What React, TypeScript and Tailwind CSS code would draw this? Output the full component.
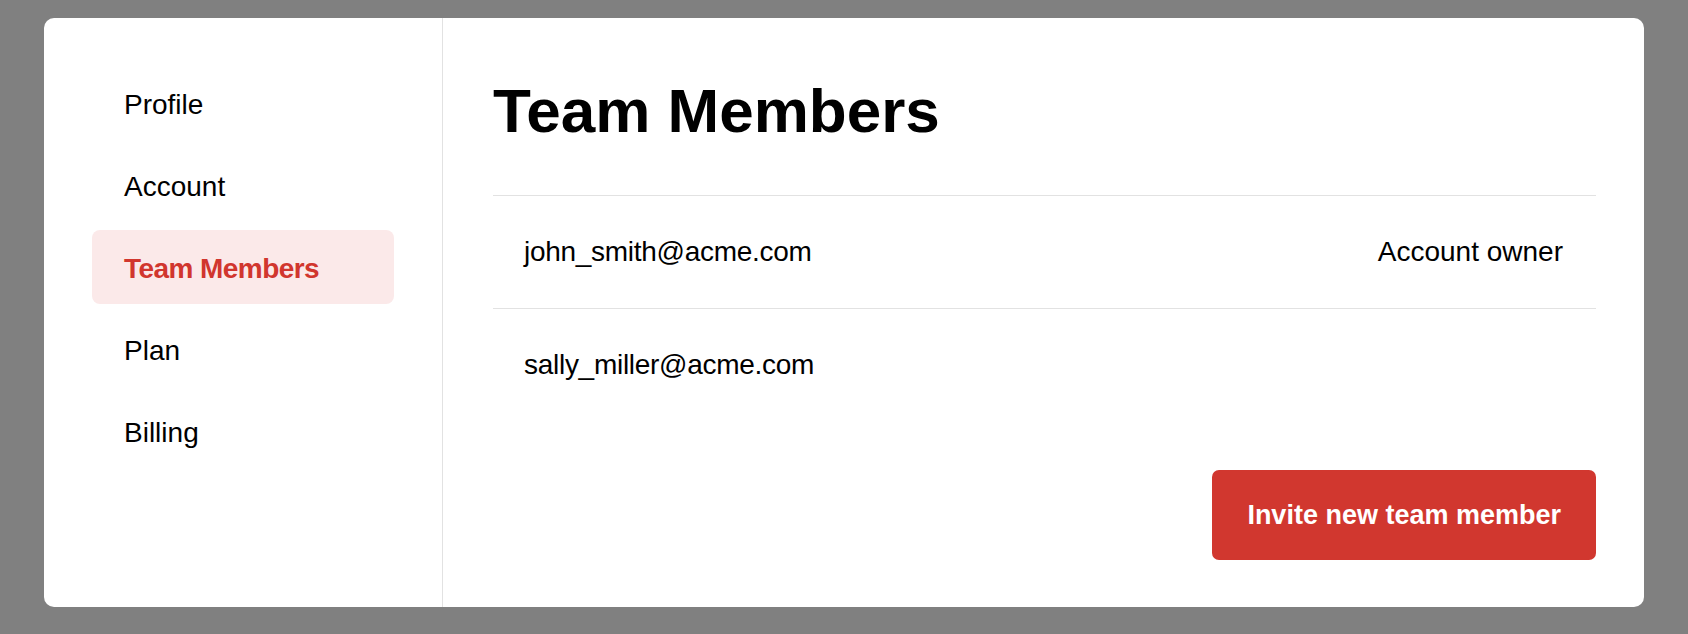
import { useState } from 'react';

const navItems = ['Profile', 'Account', 'Team Members', 'Plan', 'Billing'];

const members = [
  { email: 'john_smith@acme.com', role: 'Account owner' },
  { email: 'sally_miller@acme.com', role: '' },
];

export default function App() {
  const [active, setActive] = useState('Team Members');

  return (
    <div className="min-h-screen bg-[#808080] px-[44px] pt-[18px] font-['Liberation_Sans',Arial,sans-serif] text-black">
      <div className="flex h-[589px] overflow-hidden rounded-[10px] bg-white">
        {/* sidebar */}
        <nav className="flex w-[399px] shrink-0 flex-col gap-2 border-r border-[#e2e2e2] px-[48px] pt-[48px]">
          {navItems.map((item) => {
            const isActive = item === active;
            return (
              <button
                key={item}
                onClick={() => setActive(item)}
                className={
                  isActive
                    ? 'flex h-[74px] items-center rounded-[8px] bg-[#fbe9e9] pl-[32px] pt-[4px] text-left text-[28px] leading-8 font-bold tracking-[-0.02em] text-[#d1362e]'
                    : 'flex h-[74px] items-center rounded-[8px] pl-[32px] pt-[4px] text-left text-[28px] leading-8'
                }
              >
                {item}
              </button>
            );
          })}
        </nav>

        {/* main */}
        <main className="flex flex-1 flex-col pl-[50px] pr-[48px] pt-[62px]">
          <h1 className="text-[62px] leading-[61px] font-bold">Team Members</h1>

          <ul className="mt-[54px]">
            {members.map((m) => (
              <li
                key={m.email}
                className="flex items-center justify-between border-t border-[#e2e2e2] py-10 pl-[31px] pr-[33px] text-[28px] leading-8"
              >
                <span className="tracking-[-0.01em]">{m.email}</span>
                {m.role && <span>{m.role}</span>}
              </li>
            ))}
          </ul>

          <div className="mt-[49px] flex justify-end">
            <button className="h-[90px] rounded-[7px] bg-[#d1372f] px-[35px] text-[27px] font-bold text-white">
              Invite new team member
            </button>
          </div>
        </main>
      </div>
    </div>
  );
}
